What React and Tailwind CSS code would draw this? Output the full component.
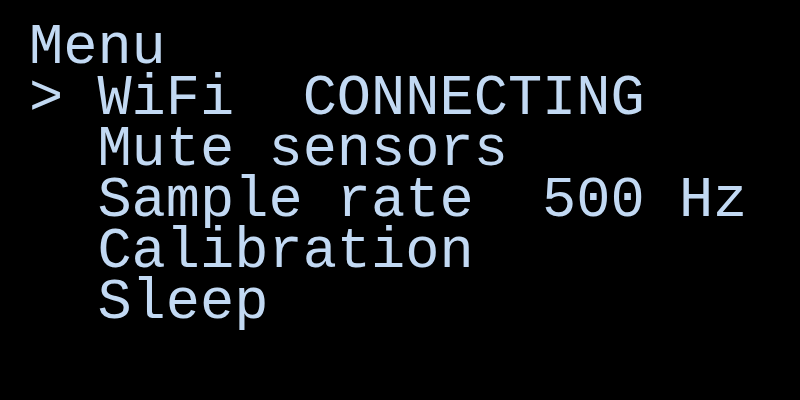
export default function App() {
    const lines = [
        'Menu',
        '> WiFi  CONNECTING',
        '  Mute sensors',
        '  Sample rate  500 Hz',
        '  Calibration',
        '  Sleep',
    ];

    return (
        <div className="w-[800px] h-[400px] bg-black overflow-hidden pl-[29px] pt-[23px]">
            <div className="font-['Liberation_Mono',monospace] text-[57px] leading-[51px] text-[#c2d9f3] whitespace-pre">
                {lines.map((line, i) => (
                    <div key={i}>{line}</div>
                ))}
            </div>
        </div>
    );
}
